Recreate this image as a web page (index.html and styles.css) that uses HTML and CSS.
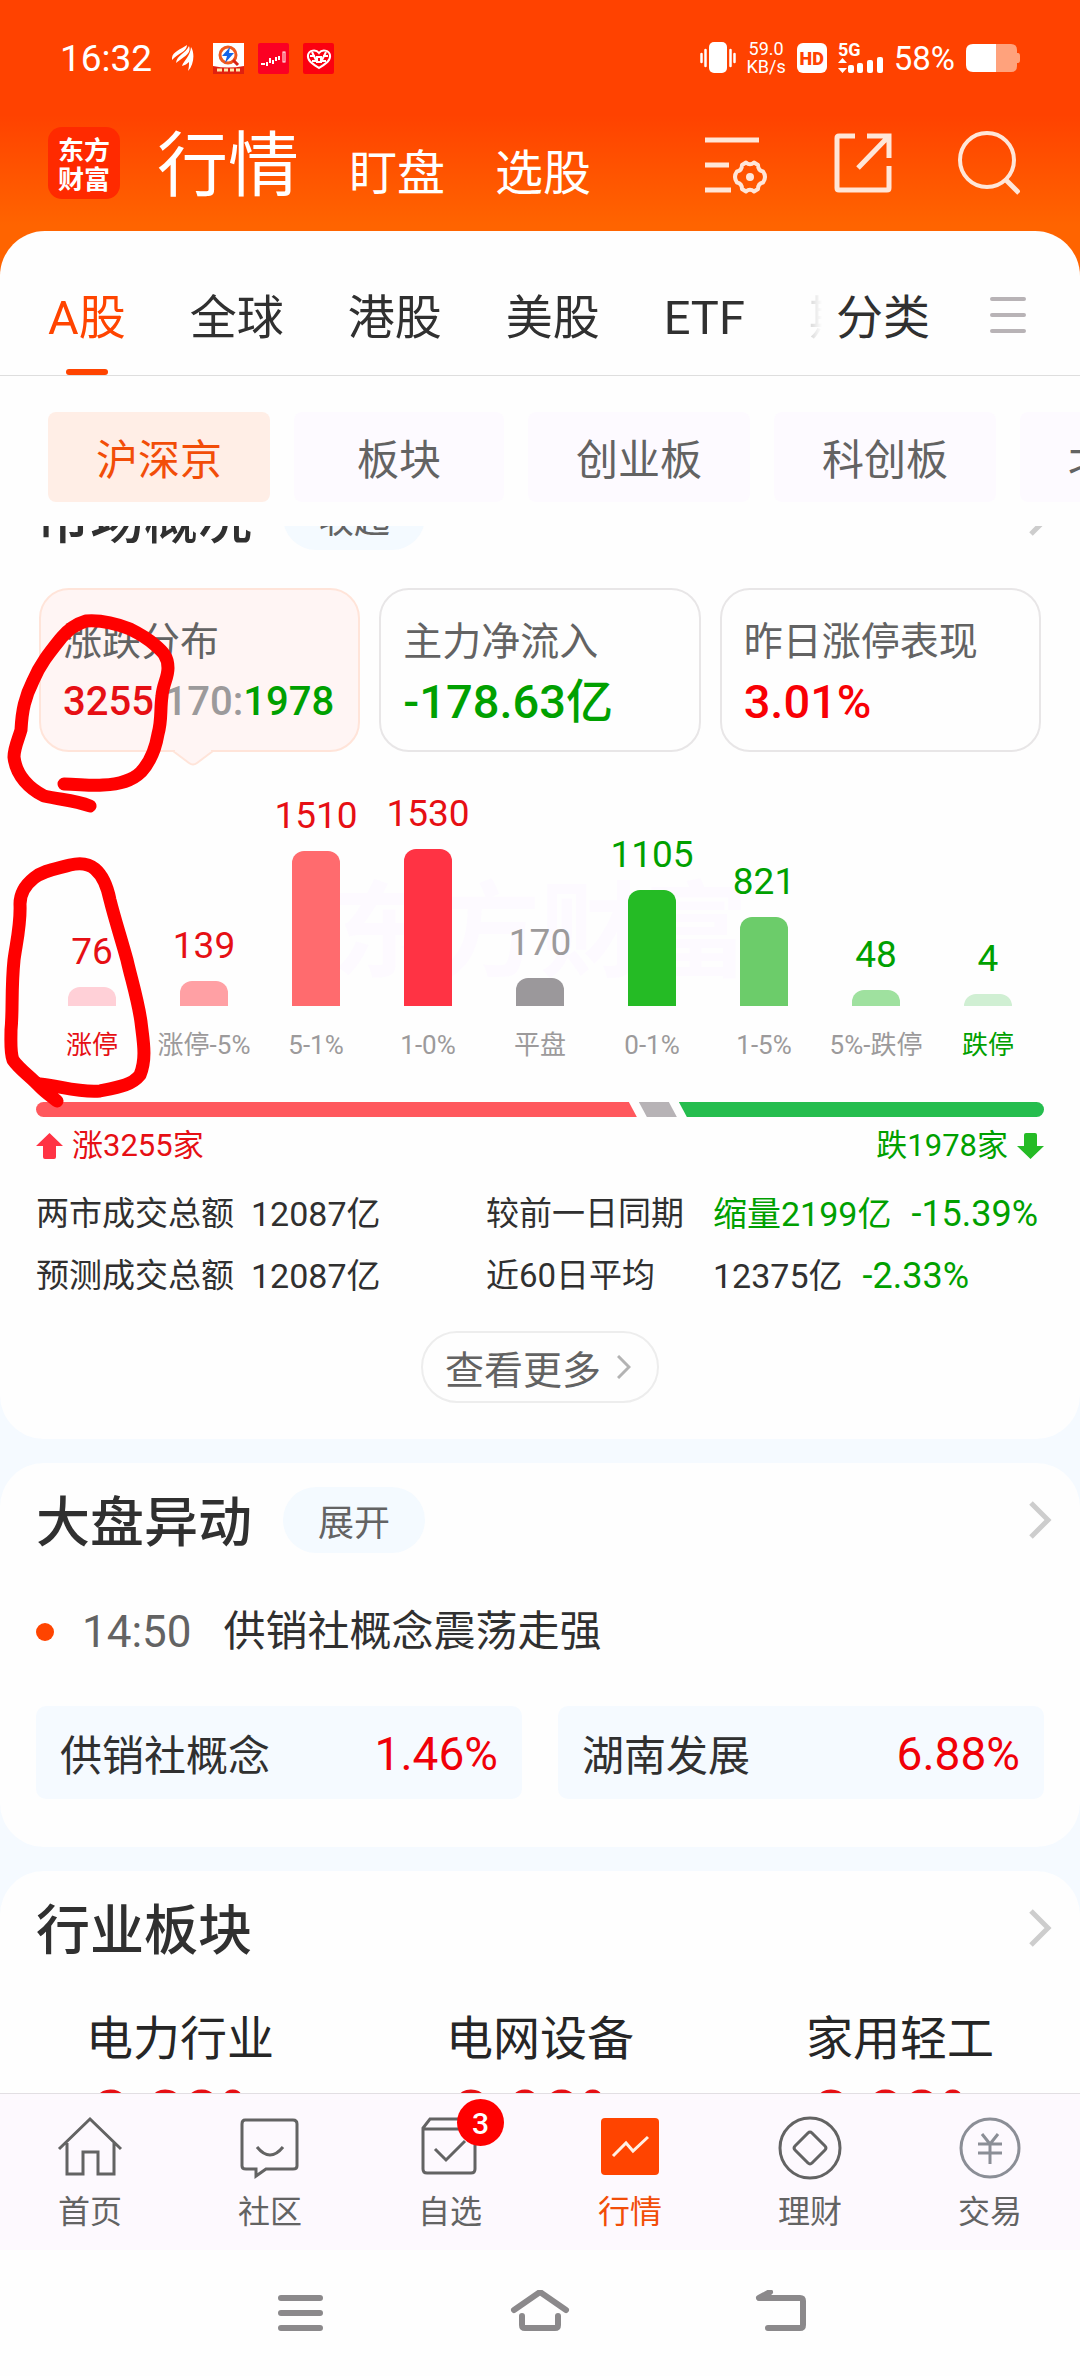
FILE: index.html
```html
<!DOCTYPE html>
<html lang="zh-CN">
<head>
    <meta charset="UTF-8">
    <meta name="viewport" content="width=device-width, initial-scale=1.0">
    <title>行情 - 东方财富</title>
    <link rel="stylesheet" href="styles.css">
</head>
<body>
    <header class="top">
        <div class="status">
            <span class="time">16:32</span>
            <svg class="s-wing" width="22" height="26" viewBox="0 0 22 26" fill="#fff">
                <path d="M0 15C-1 7 8 5 15 0C15 7 6 8 0 15Z"/>
                <path d="M4 18C5 10 13 9 17 1C20 9 11 12 4 18Z"/>
                <path d="M10 21C12 15 18 12 19 2C23 8 22 20 16 26C17 22 17 20 17 17C15 19 13 20 10 21Z"/>
            </svg>
            <svg class="s-app" width="31" height="31" viewBox="0 0 31 31">
                <rect width="31" height="31" fill="#fff"/>
                <circle cx="15" cy="12" r="8" fill="none" stroke="#f05a1e" stroke-width="3"/>
                <path d="M20 17l5 5" stroke="#d82414" stroke-width="3"/>
                <path d="M17 4L9 13h5l-2 7 9-10h-5z" fill="#1565e8"/>
                <path d="M0 23q15 3 31 0v8H0z" fill="#e02010"/>
                <path d="M4 27h5m2 0h4m2 0h4m2 0h4" stroke="#ffe9a8" stroke-width="3"/>
            </svg>
            <svg class="s-app" width="31" height="31" viewBox="0 0 31 31">
                <rect width="31" height="31" rx="2" fill="#fb0023"/>
                <path d="M3 21h4M9 19v4M12 15v5M15 17v4M18 14v4M21 13v4" stroke="#fff" stroke-width="2"/>
                <rect x="25" y="9" width="2" height="10" fill="none" stroke="#fff"/>
            </svg>
            <svg class="s-app" width="31" height="31" viewBox="0 0 31 31">
                <rect width="31" height="31" rx="2" fill="#fb0010"/>
                <path d="M16 25C10 21 4 18 5 12c1-5 8-6 11-2c3-4 10-3 11 2c1 6-5 9-11 13z" fill="none" stroke="#fff" stroke-width="2"/>
                <path d="M7 13h5m8 0h5M9 9l4 8m10-8l-4 8M14 14h4v5h-4zM9 18h4m6 0h4" fill="none" stroke="#fff" stroke-width="2"/>
            </svg>
            <div class="status-right">
                <svg width="36" height="32" viewBox="0 0 36 32" fill="#fff">
                    <rect x="9" y="0" width="18" height="31" rx="5"/>
                    <path d="M1.500 12v8M5.500 8v16M30.500 8v16M34.500 12v8" stroke="#fff" stroke-width="2.500" stroke-linecap="round"/>
                </svg>
                <span class="speed">59.0<br>KB/s</span>
                <span class="hd">HD</span>
                <svg class="signal" width="45" height="32" viewBox="0 0 45 32" fill="#fff">
                    <text x="0" y="14" class="net">5G</text>
                    <path d="M0 21l4.500-5 4.500 5zM0 26h9l-4.500 5z"/>
                    <rect x="10" y="23" width="6" height="8" rx="2"/>
                    <rect x="19" y="21" width="6" height="10" rx="2"/>
                    <rect x="29" y="18" width="6" height="13" rx="2"/>
                    <rect x="39" y="15" width="6" height="16" rx="2"/>
                </svg>
                <span class="battery-text">58%</span>
                <svg width="54" height="28" viewBox="0 0 54 28">
                    <path d="M30 0h15q6 0 6 6v3h1q2 0 2 3v4q0 3-2 3h-1v3q0 6-6 6H30z" fill="#ffa27c"/>
                    <path d="M30 0H7Q0 0 0 7v14q0 7 7 7h23z" fill="#fff"/>
                </svg>
            </div>
        </div>

        <div class="title-bar">
            <div class="logo">东方<br>财富</div>
            <nav class="main-nav">
                <a href="#" class="current">行情</a>
                <a href="#">盯盘</a>
                <a href="#">选股</a>
            </nav>
            <div class="tools">
                <button aria-label="设置">
                    <svg width="64" height="62" viewBox="0 0 64 62" fill="none" stroke="#ffe6d8" stroke-width="5">
                        <path d="M1 8h54M1 33h24M1 58h26"/>
                        <path d="M42 30.500Q46 34 50 30.500L54 33Q54 38.500 59 39.500Q63 45 59 50.500Q54 51.500 54 57L50 59.500Q46 56 42 59.500L38 57Q38 51.500 33 50.500Q29 45 33 39.500Q38 38.500 38 33Z" stroke-width="4" stroke-linejoin="round"/>
                        <circle cx="46" cy="45" r="4" fill="#ffe6d8" stroke="none"/>
                    </svg>
                </button>
                <button aria-label="分享">
                    <svg width="58" height="60" viewBox="0 0 58 60" fill="none" stroke="#ffe6d8" stroke-width="5">
                        <path d="M21 3H5Q3 3 3 5v50q0 2 2 2h48q2 0 2-2V33M33 3h22v22M54 4L24 35"/>
                    </svg>
                </button>
                <button aria-label="搜索">
                    <svg width="62" height="64" viewBox="0 0 62 64" fill="none" stroke="#ffe6d8" stroke-width="4">
                        <circle cx="29" cy="29" r="27"/>
                        <path d="M47 48l14 14" stroke-width="5"/>
                    </svg>
                </button>
            </div>
        </div>

        <div class="sheet">
            <nav class="market-tabs">
                <div class="tab-scroll">
                    <a href="#" class="active">A股</a>
                    <a href="#">全球</a>
                    <a href="#">港股</a>
                    <a href="#">美股</a>
                    <a href="#">ETF</a>
                    <a href="#">期货</a>
                </div>
                <a href="#" class="category">分类</a>
                <button class="menu" aria-label="菜单">
                    <svg width="36" height="36" viewBox="0 0 36 36" stroke="#b8b3b6" stroke-width="4" stroke-linecap="round">
                        <path d="M2 2h32M2 18h32M2 34h32"/>
                    </svg>
                </button>
            </nav>
            <div class="filters">
                <button class="chip active">沪深京</button>
                <button class="chip">板块</button>
                <button class="chip">创业板</button>
                <button class="chip">科创板</button>
                <button class="chip">北交所</button>
            </div>
        </div>
    </header>

    <main class="content">
        <section class="panel overview">
            <div class="panel-head">
                <h2>市场概况</h2>
                <button class="pill">收起</button>
                <svg class="more" width="24" height="40" viewBox="0 0 24 40"><path d="M3 3l17 17L3 37"/></svg>
            </div>

            <div class="cards">
                <div class="card selected">
                    <div class="card-label">涨跌分布</div>
                    <div class="card-value small"><span class="up">3255</span>:170:<span class="down">1978</span></div>
                    <svg class="pointer" width="42" height="16" viewBox="0 0 42 16">
                        <path d="M1 1L17 13q4 3 8 0L41 1" fill="#fff5f4" stroke="#ffe4d9" stroke-width="2"/>
                        <path d="M3 0h36" stroke="#fff5f4" stroke-width="3"/>
                    </svg>
                </div>
                <div class="card">
                    <div class="card-label">主力净流入</div>
                    <div class="card-value down">-178.63亿</div>
                </div>
                <div class="card">
                    <div class="card-label">昨日涨停表现</div>
                    <div class="card-value bright">3.01%</div>
                </div>
            </div>

            <div class="chart">
                <div class="watermark">东方财富</div>
                <div class="col up"><b>76</b><i class="bar r1" style="height:19px"></i><span class="hot">涨停</span></div>
                <div class="col up"><b>139</b><i class="bar r2" style="height:25px"></i><span>涨停-5%</span></div>
                <div class="col up"><b>1510</b><i class="bar r3" style="height:155px"></i><span>5-1%</span></div>
                <div class="col up"><b>1530</b><i class="bar r4" style="height:157px"></i><span>1-0%</span></div>
                <div class="col flat"><b>170</b><i class="bar g0" style="height:28px"></i><span>平盘</span></div>
                <div class="col down"><b>1105</b><i class="bar g4" style="height:116px"></i><span>0-1%</span></div>
                <div class="col down"><b>821</b><i class="bar g3" style="height:89px"></i><span>1-5%</span></div>
                <div class="col down"><b>48</b><i class="bar g2" style="height:16px"></i><span>5%-跌停</span></div>
                <div class="col down"><b>4</b><i class="bar g1" style="height:12px"></i><span class="hot">跌停</span></div>
            </div>

            <div class="ratio">
                <i class="ratio-up" style="flex-grow:3255"></i>
                <i class="ratio-flat"></i>
                <i class="ratio-down" style="flex-grow:1978"></i>
            </div>
            <div class="ratio-text">
                <span class="up">
                    <svg width="27" height="26" viewBox="0 0 27 26" fill="#ff3344"><path d="M13.500 0L27 13h-7v11q0 2-2 2H9q-2 0-2-2V13H0z"/></svg>
                    涨3255家
                </span>
                <span class="down">
                    跌1978家
                    <svg width="27" height="26" viewBox="0 0 27 26" fill="#25bb25"><path d="M13.500 26L27 13h-7V2q0-2-2-2H9Q7 0 7 2v11H0z"/></svg>
                </span>
            </div>

            <table class="totals">
                <tr>
                    <th>两市成交总额</th>
                    <td>12087亿</td>
                    <th>较前一日同期</th>
                    <td><span class="down">缩量2199亿</span><span class="down rate">-15.39%</span></td>
                </tr>
                <tr>
                    <th>预测成交总额</th>
                    <td>12087亿</td>
                    <th>近60日平均</th>
                    <td>12375亿<span class="down rate">-2.33%</span></td>
                </tr>
            </table>

            <button class="see-more">
                查看更多
                <svg width="14" height="24" viewBox="0 0 14 24" fill="none" stroke="#b3b3b3" stroke-width="3"><path d="M1 1l11 11L1 23"/></svg>
            </button>
        </section>

        <section class="panel movement">
            <div class="panel-head">
                <h2>大盘异动</h2>
                <button class="pill">展开</button>
                <svg class="more" width="24" height="40" viewBox="0 0 24 40"><path d="M3 3l17 17L3 37"/></svg>
            </div>
            <div class="event">
                <i class="dot"></i>
                <time>14:50</time>
                <a href="#">供销社概念震荡走强</a>
            </div>
            <div class="stocks">
                <a href="#" class="stock">供销社概念<span>1.46%</span></a>
                <a href="#" class="stock">湖南发展<span>6.88%</span></a>
            </div>
        </section>

        <section class="panel">
            <div class="panel-head">
                <h2>行业板块</h2>
                <svg class="more" width="24" height="40" viewBox="0 0 24 40"><path d="M3 3l17 17L3 37"/></svg>
            </div>
            <div class="sectors">
                <div class="sector">电力行业<b>3.28%</b></div>
                <div class="sector">电网设备<b>2.98%</b></div>
                <div class="sector">家用轻工<b>2.88%</b></div>
            </div>
        </section>
    </main>

    <nav class="tabbar">
        <a href="#">
            <svg width="66" height="66" viewBox="0 0 66 66">
                <path d="M2 35L33 5l31 30M10 29v31h16V38h15v22h16V29"/>
            </svg>
            首页
        </a>
        <a href="#">
            <svg width="66" height="66" viewBox="0 0 66 66">
                <path d="M8 6h48q4 0 4 4v42q0 3-4 3H29l-10 7v-7H9q-4 0-4-3V10q0-4 3-4zM20 33q13 16 26 0"/>
            </svg>
            社区
        </a>
        <a href="#">
            <svg width="66" height="66" viewBox="0 0 66 66">
                <path d="M7 15h51v40q0 4-4 4H10q-4 0-4-4V14l7-9h38l7 10M18 35l11 11 19-19"/>
            </svg>
            自选
            <span class="badge">3</span>
        </a>
        <a href="#" class="active">
            <svg width="66" height="66" viewBox="0 0 66 66">
                <rect x="4" y="4" width="58" height="57" rx="4" fill="#ff4400" stroke="none"/>
                <path d="M16 42l13-13 7 8 15-14" stroke="#fff0e4" stroke-width="3"/>
            </svg>
            行情
        </a>
        <a href="#">
            <svg width="66" height="66" viewBox="0 0 66 66">
                <circle cx="33" cy="34" r="30"/>
                <path d="M31 19q2-2 4 0l13 13q2 2 0 4L35 49q-2 2-4 0L18 36q-2-2 0-4z"/>
            </svg>
            理财
        </a>
        <a href="#">
            <svg class="trade" width="66" height="66" viewBox="0 0 66 66">
                <circle cx="33" cy="34" r="29"/>
                <path d="M25 20l8 10 8-10M21 30h24M21 39h24M33 30v20"/>
            </svg>
            交易
        </a>
    </nav>

    <footer class="sysnav">
        <button aria-label="最近任务">
            <svg width="60" height="46" viewBox="0 2 60 46"><path d="M11 10h39M11 25h39M11 40h39"/></svg>
        </button>
        <button aria-label="主屏幕">
            <svg width="60" height="46" viewBox="0 2 60 46"><path d="M4 22L30 4l26 18M12 28v9q0 3 3 3h30q3 0 3-3v-9"/></svg>
        </button>
        <button aria-label="返回">
            <svg width="60" height="46" viewBox="0 2 60 46"><path d="M20 4L9 10h41q3 0 3 3v24q0 3-3 3H18"/></svg>
        </button>
    </footer>

    <!-- hand-drawn marks over the market overview -->
    <svg class="marks" width="180" height="560" viewBox="0 560 180 560">
        <path d="M64 784C78 784 90 786 103 785C120 784 132 781 141 772C152 760 156 746 158 734C162 720 160 710 162 696C163 684 168 678 168 668C168 656 162 651 155 645C146 637 138 633 130 629C112 622 98 620 86 621C76 624 69 629 62 637C50 652 40 664 33 681C25 697 22 710 21 730C18 740 14 748 14 757C16 776 30 789 44 796C62 800 74 800 90 806"/>
        <path d="M40 1084C60 1086 80 1093 100 1091C120 1087 132 1085 140 1075C147 1058 143 1040 141 1022C138 1000 131 978 127 960C121 938 115 920 110 900C107 885 102 875 95 869C88 863 78 863 70 865C56 869 44 870 34 878C24 886 20 894 20 904C21 925 16 944 14 960C11 990 13 1010 11 1030C11 1040 10 1052 13 1060C20 1070 30 1076 40 1087C46 1093 52 1097 57 1101"/>
    </svg>
</body>
</html>
```
FILE: styles.css
```css
* {
    box-sizing: border-box;
}
body {
    margin: 0;
    height: 100vh;
    display: flex;
    flex-direction: column;
    position: relative;
    overflow: hidden;
    background: #fefefe;
    color: #303030;
    font-family: Roboto, "Noto Sans CJK SC", sans-serif;
}
a {
    color: inherit;
    text-decoration: none;
}
button {
    margin: 0;
    padding: 0;
    border: 0;
    background: none;
    color: inherit;
    font: inherit;
}
svg {
    display: block;
    flex: none;
}
h2 {
    margin: 0;
}
.up {
    color: #e60f14;
}
.down {
    color: #00a000;
}
.bright {
    color: #f80005;
}

/* header */
.top {
    flex: none;
    background: linear-gradient(#ff4200 115px, #ff6400 225px);
}
.status {
    display: flex;
    align-items: center;
    height: 116px;
    padding: 0 60px;
    color: #fff;
}
.time {
    font-size: 37px;
    margin-right: 20px;
}
.s-wing {
    margin-right: 19px;
}
.s-app {
    margin-right: 14px;
}
.status-right {
    display: flex;
    align-items: center;
    gap: 11px;
    margin-left: auto;
}
.speed {
    font-size: 18px;
    line-height: 18px;
    text-align: center;
}
.hd {
    width: 30px;
    height: 30px;
    border-radius: 6px;
    background: #fff;
    color: #ff4200;
    font-size: 18px;
    font-weight: 900;
    line-height: 31px;
    text-align: center;
}
.net {
    font-size: 18px;
    font-weight: 700;
}
.battery-text {
    font-size: 33px;
}
.title-bar {
    display: flex;
    align-items: center;
    height: 115px;
    padding: 0 60px 21px 48px;
}
.logo {
    width: 72px;
    height: 72px;
    padding-top: 7px;
    border-radius: 14px;
    background: #ff2a00;
    color: #fff;
    font-family: "Noto Sans CJK SC", sans-serif;
    font-size: 26px;
    font-weight: 700;
    line-height: 29px;
    text-align: center;
}
.main-nav {
    display: flex;
    align-items: baseline;
    gap: 50px;
    margin-left: 37px;
    padding-top: 14px;
    color: #fff;
    font-size: 48px;
    line-height: 90px;
}
.main-nav .current {
    font-size: 71px;
}
.tools {
    display: flex;
    align-items: center;
    gap: 66px;
    margin-left: auto;
}

/* market tabs */
.sheet {
    border-radius: 45px 45px 0 0;
    background: #fefefe;
}
.market-tabs {
    display: flex;
    align-items: flex-start;
    padding: 56px 54px 0 48px;
    border-bottom: 1px solid #dedede;
    font-size: 47px;
    line-height: 62px;
}
.tab-scroll {
    display: flex;
    flex: 1;
    gap: 64px;
    min-width: 0;
    overflow: hidden;
    white-space: nowrap;
    -webkit-mask-image: linear-gradient(to left, transparent, rgba(0,0,0,0.3) 20px, #000 40px);
    mask-image: linear-gradient(to left, transparent, rgba(0,0,0,0.3) 20px, #000 40px);
}
.tab-scroll a {
    flex: none;
}
.tab-scroll a::after {
    content: "";
    display: block;
    width: 42px;
    height: 6px;
    margin: 20px auto 0;
    border-radius: 3px;
}
.tab-scroll .active {
    color: #ff4400;
}
.tab-scroll .active::after {
    background: #ff4400;
}
.category {
    margin: 0 60px 0 14px;
}
.menu {
    padding-top: 10px;
}
.filters {
    display: flex;
    gap: 24px;
    padding: 36px 0 24px 48px;
    overflow: hidden;
}
.chip {
    flex: none;
    min-width: 210px;
    height: 90px;
    padding: 0 48px 2px;
    border-radius: 8px;
    background: #fdfaff;
    color: #636363;
    font-size: 42px;
}
.chip.active {
    background: #ffeee6;
    color: #f24d08;
}

/* scrolled content */
.content {
    flex: 1;
    min-height: 0;
    overflow: hidden;
    background: #f5faff;
}
.panel {
    margin-bottom: 24px;
    padding: 24px 36px 0;
    border-radius: 44px;
    background: #fefefe;
}
.overview {
    margin-top: -66px;
    padding-bottom: 36px;
}
.movement {
    padding-bottom: 48px;
}
.panel-head {
    display: flex;
    align-items: center;
    height: 66px;
    margin-right: -8px;
}
.panel-head h2 {
    padding-top: 8px;
    font-size: 54px;
    font-weight: 500;
    line-height: 66px;
}
.pill {
    width: 142px;
    height: 66px;
    margin-left: 31px;
    border-radius: 33px;
    background: #f4faff;
    color: #636363;
    font-size: 36px;
}
.more {
    margin-left: auto;
    fill: none;
    stroke: #cdcdcd;
    stroke-width: 5;
}
.cards {
    display: grid;
    grid-template-columns: repeat(3, 1fr);
    gap: 19px;
    margin: 38px 3px 0;
}
.card {
    position: relative;
    height: 164px;
    padding: 24px 0 0 22px;
    border: 2px solid #e8e6e7;
    border-radius: 30px;
    white-space: nowrap;
}
.card.selected {
    border-color: #ffe4d9;
    background: #fff5f4;
}
.card-label {
    color: #636363;
    font-size: 39px;
    line-height: 56px;
}
.card-value {
    font-size: 47px;
    font-weight: 500;
    line-height: 64px;
}
.card-value.small {
    color: #9c9a9b;
    font-size: 40px;
}
.pointer {
    position: absolute;
    left: 131px;
    top: 160px;
}
.chart {
    position: relative;
    display: flex;
    align-items: flex-end;
    height: 294px;
    margin-top: 14px;
}
.watermark {
    position: absolute;
    left: 0;
    right: 0;
    top: 98px;
    color: #fdfaff;
    font-size: 104px;
    font-weight: 700;
    line-height: 140px;
    text-align: center;
}
.col {
    position: relative;
    display: flex;
    flex: 1;
    flex-direction: column;
    align-items: center;
}
.col b {
    margin-bottom: 15px;
    font-size: 37px;
    font-weight: 400;
    line-height: 40px;
}
.col.flat b {
    color: #9c9a9b;
}
.col span {
    color: #9c9a9b;
    font-size: 26px;
    line-height: 30px;
    white-space: nowrap;
}
.col .hot {
    color: inherit;
}
.bar {
    width: 48px;
    margin-bottom: 24px;
    border-radius: 12px 12px 0 0;
}
.r1 { background: #ffd0d7; }
.r2 { background: #ffa0a4; }
.r3 { background: #ff6b6e; }
.r4 { background: #ff3344; }
.g0 { background: #9b989b; }
.g4 { background: #25bb25; }
.g3 { background: #6ccc6a; }
.g2 { background: #9fe19f; }
.g1 { background: #d0efd3; }

.ratio {
    display: flex;
    gap: 2px;
    height: 15px;
    margin-top: 42px;
}
.ratio-up {
    border-radius: 8px 0 0 8px;
    background: #ff585d;
    clip-path: polygon(0 0, calc(100% - 8px) 0, 100% 100%, 0 100%);
}
.ratio-flat {
    width: 38px;
    background: #b7b3b6;
    clip-path: polygon(0 0, 30px 0, 100% 100%, 8px 100%);
}
.ratio-down {
    border-radius: 0 8px 8px 0;
    background: #25bd4e;
    clip-path: polygon(0 0, 100% 0, 100% 100%, 8px 100%);
}
.ratio-text {
    display: flex;
    justify-content: space-between;
    margin-top: 9px;
    font-size: 31px;
    line-height: 40px;
}
.ratio-text span {
    display: flex;
    align-items: center;
    gap: 9px;
}
.totals {
    width: 100%;
    margin-top: 17px;
    border-collapse: collapse;
    table-layout: fixed;
    font-size: 33px;
    line-height: 62px;
    text-align: left;
    white-space: nowrap;
}
.totals th, .totals td {
    padding: 0;
    font-weight: 400;
}
.totals td {
    font-size: 34px;
}
.totals th:first-child {
    width: 215px;
}
.totals td:nth-child(2) {
    width: 235px;
}
.totals th:nth-child(3) {
    width: 227px;
}
.rate {
    margin-left: 20px;
    font-size: 36px;
    line-height: 40px;
}
.see-more {
    display: flex;
    align-items: center;
    gap: 16px;
    height: 72px;
    margin: 24px auto 0;
    padding: 0 26px 0 22px;
    border: 2px solid #ededed;
    border-radius: 36px;
    color: #636363;
    font-size: 39px;
}

/* market movement */
.event {
    display: flex;
    align-items: center;
    margin-top: 49px;
    font-size: 42px;
    line-height: 60px;
}
.dot {
    width: 18px;
    height: 18px;
    border-radius: 50%;
    background: #ff4400;
}
.event time {
    margin: 0 32px 0 28px;
    color: #636363;
    font-size: 44px;
}
.stocks {
    display: grid;
    grid-template-columns: 1fr 1fr;
    gap: 36px;
    margin-top: 44px;
}
.stock {
    display: flex;
    align-items: center;
    justify-content: space-between;
    height: 93px;
    padding: 0 24px;
    border-radius: 10px;
    background: #f5faff;
    font-size: 42px;
}
.stock span {
    padding-top: 3px;
    color: #f00008;
    font-size: 46px;
}
.sectors {
    display: flex;
    margin: 48px -36px 0;
}
.sector {
    flex: 1;
    color: #262626;
    font-size: 47px;
    line-height: 60px;
    text-align: center;
}
.sector b {
    display: block;
    margin-top: 8px;
    color: #e60f14;
    font-size: 64px;
    font-weight: 500;
    line-height: 76px;
}

/* bottom bars */
.tabbar {
    display: flex;
    flex: none;
    height: 157px;
    border-top: 1px solid #e2dfe3;
    background: #fdf9fe;
    color: #636363;
    font-size: 32px;
    line-height: 44px;
}
.tabbar a {
    position: relative;
    display: flex;
    flex: 1;
    flex-direction: column;
    align-items: center;
    gap: 10px;
    padding-top: 20px;
}
.tabbar svg {
    fill: none;
    stroke: #636363;
    stroke-width: 3;
}
.tabbar .trade {
    stroke: #8b8e96;
}
.tabbar .active {
    color: #f24d08;
}
.badge {
    position: absolute;
    left: calc(50% + 7px);
    top: 5px;
    width: 47px;
    height: 47px;
    border-radius: 50%;
    background: #ff0000;
    color: #fff;
    font-size: 30px;
    font-weight: 500;
    line-height: 49px;
    text-align: center;
}
.sysnav {
    display: flex;
    flex: none;
    justify-content: center;
    gap: 180px;
    height: 126px;
    background: #fefefe;
}
.sysnav svg {
    fill: none;
    stroke: #8b898b;
    stroke-width: 6;
    stroke-linecap: round;
    stroke-linejoin: round;
}
.marks {
    position: absolute;
    left: 0;
    top: 560px;
    fill: none;
    stroke: #ff0000;
    stroke-width: 13;
    stroke-linecap: round;
    stroke-linejoin: round;
    pointer-events: none;
}
```
